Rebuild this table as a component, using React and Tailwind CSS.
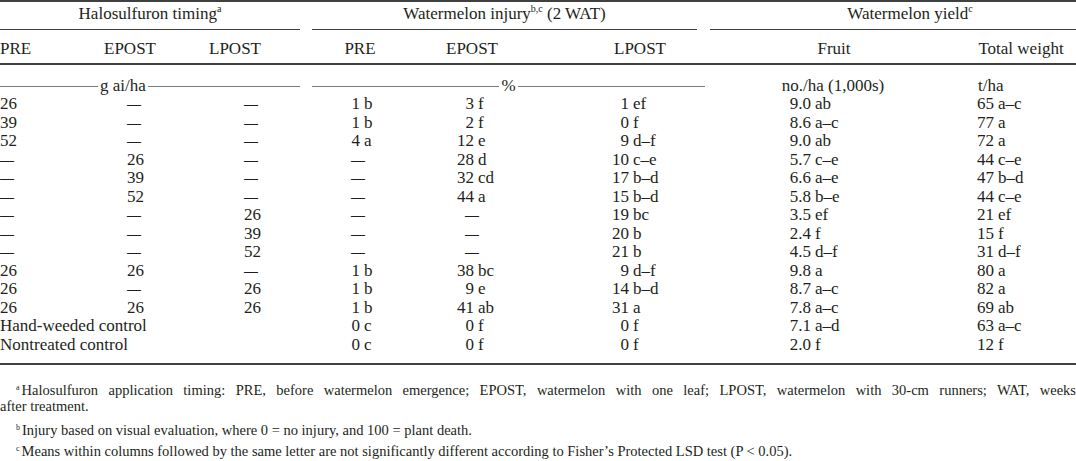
import React from 'react';

// Halosulfuron / watermelon results table

const rows = [
    ['26', '—', '—', '1 b', '3 f', '1 ef', '9.0 ab', '65 a–c'],
    ['39', '—', '—', '1 b', '2 f', '0 f', '8.6 a–c', '77 a'],
    ['52', '—', '—', '4 a', '12 e', '9 d–f', '9.0 ab', '72 a'],
    ['—', '26', '—', '—', '28 d', '10 c–e', '5.7 c–e', '44 c–e'],
    ['—', '39', '—', '—', '32 cd', '17 b–d', '6.6 a–e', '47 b–d'],
    ['—', '52', '—', '—', '44 a', '15 b–d', '5.8 b–e', '44 c–e'],
    ['—', '—', '26', '—', '—', '19 bc', '3.5 ef', '21 ef'],
    ['—', '—', '39', '—', '—', '20 b', '2.4 f', '15 f'],
    ['—', '—', '52', '—', '—', '21 b', '4.5 d–f', '31 d–f'],
    ['26', '26', '—', '1 b', '38 bc', '9 d–f', '9.8 a', '80 a'],
    ['26', '—', '26', '1 b', '9 e', '14 b–d', '8.7 a–c', '82 a'],
    ['26', '26', '26', '1 b', '41 ab', '31 a', '7.8 a–c', '69 ab'],
    ['Hand-weeded control', null, null, '0 c', '0 f', '0 f', '7.1 a–d', '63 a–c'],
    ['Nontreated control', null, null, '0 c', '0 f', '0 f', '2.0 f', '12 f'],
];

function Dash({ ml }) {
    return <span className={`inline-block origin-left scale-x-[0.82] ${ml}`}>—</span>;
}

// number right-aligned in a box, letters after a space
function Val({ v, box, dash }) {
    if (v === '—') return <Dash ml={dash} />;
    const [n, l] = v.split(' ');
    return (
        <>
            <span className={`inline-block text-right ${box}`}>{n}</span>
            <span className="ml-[4px]">{l}</span>
        </>
    );
}

function Rule() {
    return <div className="h-px flex-1 bg-[#7a7a7a]" />;
}

export default function App() {
    return (
        <div className="w-[1076px] h-[461px] overflow-hidden bg-white text-[#231f20] font-['Liberation_Serif',serif] text-[17px]">
            <div className="border-t-2 border-[#404040]">
                {/* group headers */}
                <div className="flex h-[28px] leading-[18.5px]">
                    <div className="w-[300px] border-b border-[#404040] pt-[3px] text-center">
                        Halosulfuron timing<sup className="text-[10px] top-[-7px]">a</sup>
                    </div>
                    <div className="w-[12px]" />
                    <div className="w-[385px] border-b border-[#404040] pt-[3px] text-center">
                        Watermelon injury<sup className="text-[10px] top-[-7px]">b,c</sup> (2 WAT)
                    </div>
                    <div className="w-[13px]" />
                    <div className="flex-1 border-b border-[#404040] pt-[3px] pl-[34px] text-center">
                        Watermelon yield<sup className="text-[10px] top-[-7px]">c</sup>
                    </div>
                </div>

                {/* sub headers */}
                <div className="flex h-[35px] border-b-2 border-[#404040] pt-[10px] leading-[18.5px]">
                    <div className="w-[100px]">PRE</div>
                    <div className="w-[60px] text-center">EPOST</div>
                    <div className="w-[150px] text-center">LPOST</div>
                    <div className="w-[100px] text-center">PRE</div>
                    <div className="w-[124px] text-center">EPOST</div>
                    <div className="w-[212px] text-center">LPOST</div>
                    <div className="w-[176px] text-center">Fruit</div>
                    <div className="w-[44px]" />
                    <div className="w-[110px] text-center">Total weight</div>
                </div>

                {/* units */}
                <div className="h-[30px] pt-[12px]">
                    <div className="flex h-[18.5px] items-center leading-[18.5px]">
                        <div className="flex w-[300px] items-center">
                            <div className="h-px w-[98px] bg-[#7a7a7a]" />
                            <span className="px-[2px]">g ai/ha</span>
                            <Rule />
                        </div>
                        <div className="w-[12px]" />
                        <div className="flex w-[393px] items-center">
                            <Rule />
                            <span className="px-[2px]">%</span>
                            <Rule />
                        </div>
                        <div className="w-[256px] text-center">no./ha (1,000s)</div>
                        <div className="ml-[17px]">t/ha</div>
                    </div>
                </div>

                {/* data */}
                {rows.map((r, i) => (
                    <div key={i} className="flex h-[18.5px] whitespace-nowrap leading-[18.5px]">
                        {r[1] === null ? (
                            <div className="w-[312px]">{r[0]}</div>
                        ) : (
                            <>
                                <div className="w-[100px]">
                                    {r[0] === '—' ? <Dash ml="ml-0" /> : r[0]}
                                </div>
                                <div className="w-[100px]">
                                    {r[1] === '—' ? <Dash ml="ml-[27px]" /> : <span className="ml-[27px]">{r[1]}</span>}
                                </div>
                                <div className="w-[112px]">
                                    {r[2] === '—' ? <Dash ml="ml-[44px]" /> : <span className="ml-[44px]">{r[2]}</span>}
                                </div>
                            </>
                        )}
                        <div className="w-[98px]">
                            <Val v={r[3]} box="ml-[31px] w-[17px]" dash="ml-[39px]" />
                        </div>
                        <div className="w-[140px]">
                            <Val v={r[4]} box="ml-[47px] w-[17px]" dash="ml-[55px]" />
                        </div>
                        <div className="w-[160px]">
                            <Val v={r[5]} box="ml-[62px] w-[17px]" dash="ml-[62px]" />
                        </div>
                        <div className="w-[210px]">
                            <Val v={r[6]} box="ml-[79px] w-[22px]" dash="ml-[79px]" />
                        </div>
                        <div className="flex-1">
                            <Val v={r[7]} box="ml-[57px] w-[17px]" dash="ml-[57px]" />
                        </div>
                    </div>
                ))}

                <div className="mt-[9px] border-t-2 border-[#404040]" />

                {/* footnotes */}
                <div className="pt-[17px] text-[14.5px] leading-[16px]">
                    <div className="pl-[16px] text-justify [text-align-last:justify] whitespace-nowrap">
                        <sup className="text-[8px] top-[-5px] mr-[2px]">a</sup>Halosulfuron application timing: PRE, before watermelon emergence; EPOST, watermelon with one leaf; LPOST, watermelon with 30-cm runners; WAT, weeks
                    </div>
                    <div>after treatment.</div>
                    <div className="mt-[8px] pl-[16px]">
                        <sup className="text-[8px] top-[-5px] mr-[2px]">b</sup>Injury based on visual evaluation, where 0 = no injury, and 100 = plant death.
                    </div>
                    <div className="mt-[5px] pl-[16px]">
                        <sup className="text-[8px] top-[-5px] mr-[2px]">c</sup>Means within columns followed by the same letter are not significantly different according to Fisher’s Protected LSD test (P &lt; 0.05).
                    </div>
                </div>
            </div>
        </div>
    );
}
